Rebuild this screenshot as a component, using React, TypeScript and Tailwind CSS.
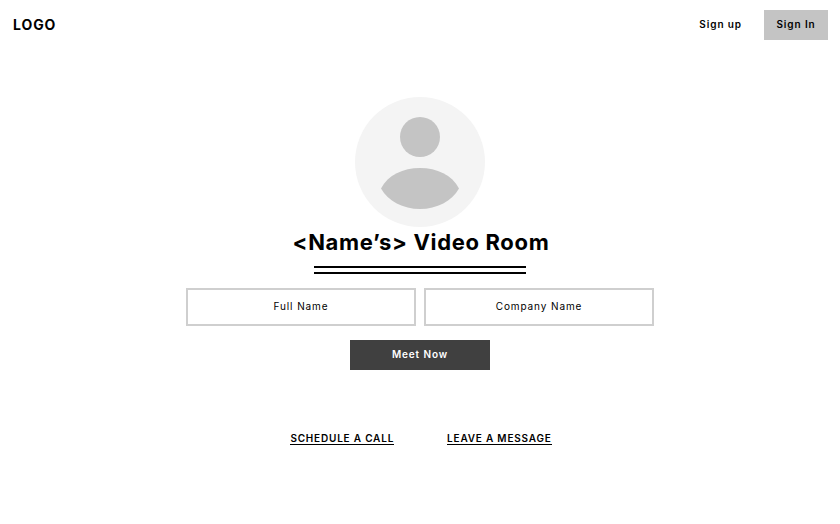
export default function App() {
  return (
    <div className="h-[524px] w-[840px] overflow-hidden bg-white font-['Inter',sans-serif] text-black antialiased">
      <header className="flex h-[50px] items-center justify-between pl-[13px] pr-3">
        <div className="text-sm font-bold tracking-[0.065em]">LOGO</div>
        <div className="flex items-center">
          <button className="mr-[22px] pb-0.5 text-[10px] font-semibold tracking-[0.09em]">Sign up</button>
          <button className="h-[30px] w-16 bg-[#c4c4c4] pb-0.5 text-[10px] font-semibold tracking-[0.09em]">Sign In</button>
        </div>
      </header>

      <main className="flex flex-col items-center">
        <div className="mt-[47px] flex h-[130px] w-[130px] flex-col items-center rounded-full bg-[#f4f4f4]">
          <div className="mt-5 h-10 w-10 rounded-full bg-[#c4c4c4]" />
          <svg className="mt-[11px]" width="78" height="41" viewBox="0 0 78 41">
            <path d="M0 20.5C7 7 22 0 39 0s32 7 39 20.5C71 33 56 41 39 41S7 33 0 20.5Z" fill="#c4c4c4" />
          </svg>
        </div>
        <h1 className="ml-0.5 text-[22px] leading-[30px] font-bold tracking-[0.03em]">&lt;Name’s&gt; Video Room</h1>
        <div className="mt-[9px] h-2 w-[212px] border-y-2 border-black" />

        <div className="mt-[14px] flex gap-2">
          <input
            placeholder="Full Name"
            className="h-[38px] w-[230px] border-2 border-[#cfcfcf] pb-0.5 text-center text-[10px] tracking-[0.09em] outline-none placeholder:text-black"
          />
          <input
            placeholder="Company Name"
            className="h-[38px] w-[230px] border-2 border-[#cfcfcf] pb-0.5 text-center text-[10px] tracking-[0.09em] outline-none placeholder:text-black"
          />
        </div>

        <button className="mt-[14px] h-[30px] w-[140px] bg-[#404040] pb-0.5 text-[10px] font-semibold tracking-[0.09em] text-white">
          Meet Now
        </button>

        <div className="mt-[62px] ml-0.5 flex gap-[53px]">
          <a className="border-b border-black text-[10px] leading-[12px] font-semibold tracking-[0.08em]">SCHEDULE A CALL</a>
          <a className="border-b border-black text-[10px] leading-[12px] font-semibold tracking-[0.08em]">LEAVE A MESSAGE</a>
        </div>
      </main>
    </div>
  );
}
